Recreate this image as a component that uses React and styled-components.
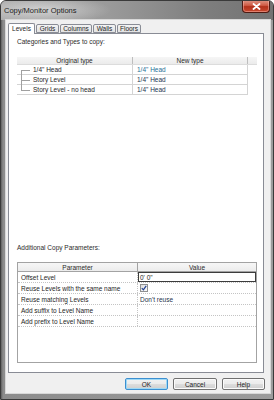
import React from "react";
import styled, { createGlobalStyle } from "styled-components";

const GlobalStyle = createGlobalStyle`
  html, body {
    margin: 0;
    padding: 0;
    background: #ffffff;
  }
  body {
    font-family: "Liberation Sans", Arial, sans-serif;
  }
`;

const Window = styled.div`
  width: 274px;
  height: 400px;
  box-sizing: border-box;
  display: flex;
  flex-direction: column;
  border: 1px solid #3a3a3a;
  border-radius: 6px 6px 0 0;
  background: linear-gradient(to bottom, #8c8c8c, #7e7e7e);
  overflow: hidden;
`;

const TitleBar = styled.div`
  height: 19px;
  flex: none;
  display: flex;
  justify-content: space-between;
  align-items: flex-start;
  padding: 0 3px 0 3px;
  background:
    radial-gradient(ellipse 70px 14px at 40px 9px, rgba(225, 225, 225, 0.75), rgba(225, 225, 225, 0) 100%),
    linear-gradient(to right, #a9a9a9 0%, #9a9a9a 40%, #7e7e7e 75%, #727272 100%);
`;

const Title = styled.span`
  margin-top: 5px;
  font-size: 7.5px;
  line-height: 9px;
  color: #1c1c1c;
`;

const CloseButton = styled.div`
  width: 28px;
  height: 13px;
  margin-top: -1px;
  box-sizing: border-box;
  display: flex;
  align-items: center;
  justify-content: center;
  border: 1px solid #4e1a12;
  border-top: none;
  border-radius: 0 0 4px 4px;
  background: linear-gradient(to bottom, #e09a8a 0%, #cf5b45 45%, #b2321c 55%, #c9482f 100%);
  box-shadow: inset 0 0 0 1px rgba(255, 200, 190, 0.45);
`;

const Frame = styled.div`
  flex: 1;
  display: flex;
  padding: 0 3px 6px 5px;
  background: linear-gradient(to right, #5f5f5f 0, #8c8c8c 2px, #9c9c9c 100%);
`;

const Client = styled.div`
  flex: 1;
  display: flex;
  flex-direction: column;
  padding: 3px 5px 3px 2px;
  background: #f0f0f0;
  box-shadow: 0 0 0 1px #d8d8d8;
`;

const TabStrip = styled.div`
  display: flex;
  align-items: flex-end;
  gap: 1px;
  height: 10px;
  position: relative;
  z-index: 1;
`;

const Tab = styled.div`
  box-sizing: border-box;
  width: ${(p) => p.$w}px;
  height: ${(p) => (p.$active ? 11 : 9)}px;
  margin-bottom: ${(p) => (p.$active ? -1 : 0)}px;
  display: flex;
  align-items: center;
  justify-content: center;
  border: 1px solid #898c95;
  border-bottom: ${(p) => (p.$active ? "none" : "1px solid #898c95")};
  border-radius: 2px 2px 0 0;
  background: ${(p) =>
    p.$active ? "#ffffff" : "linear-gradient(to bottom, #f3f3f3, #e3e3e3)"};
  font-size: 6.5px;
  color: #1e1e1e;
  padding-bottom: ${(p) => (p.$active ? 1 : 0)}px;
`;

const TabPanel = styled.div`
  flex: 1;
  display: flex;
  flex-direction: column;
  margin-right: 1px;
  padding: 3px 6px 9px 8px;
  background: #ffffff;
  border: 1px solid #898c95;
`;

const SectionLabel = styled.div`
  font-size: 6.5px;
  line-height: 10px;
  color: #2b2b2b;
  margin-bottom: ${(p) => p.$gap}px;
`;

const TypeGrid = styled.div`
  width: 240px;
  font-size: 6.5px;
  color: #1e1e1e;
`;

const TypeHeader = styled.div`
  display: flex;
  height: 8px;
  background: linear-gradient(to bottom, #f6f6f6, #ebebeb);
  border-bottom: 1px solid #dcdcdc;
  box-sizing: border-box;
`;

const TypeHeaderCell = styled.div`
  width: ${(p) => p.$w}px;
  box-sizing: border-box;
  border-right: 1px solid #bdbdbd;
  display: flex;
  align-items: center;
  justify-content: center;
  line-height: 8px;
  color: #2a2a2a;
`;

const TypeRow = styled.div`
  display: flex;
  width: 231px;
  height: 10px;
  box-sizing: border-box;
  border-bottom: 1px solid #d4d4d4;
  border-right: 1px solid #d4d4d4;
`;

const TypeCell = styled.div`
  width: ${(p) => p.$w}px;
  box-sizing: border-box;
  display: flex;
  align-items: center;
  padding-left: ${(p) => p.$pad}px;
  border-right: ${(p) => (p.$divider ? "1px solid #d4d4d4" : "none")};
  color: ${(p) => p.$color || "#1e1e1e"};
  white-space: nowrap;
`;

const ParamGrid = styled.div`
  width: 240px;
  height: 101px;
  box-sizing: border-box;
  border: 1px solid #a3a3a3;
  font-size: 6.5px;
  color: #1e1e1e;
`;

const ParamHeader = styled.div`
  display: flex;
  height: 9px;
  box-sizing: border-box;
  border-bottom: 1px solid #a3a3a3;
  background: linear-gradient(to bottom, #f7f7f7, #ececec);
`;

const ParamHeaderCell = styled.div`
  width: ${(p) => (p.$w ? `${p.$w}px` : "auto")};
  flex: ${(p) => (p.$w ? "none" : 1)};
  box-sizing: border-box;
  border-right: ${(p) => (p.$w ? "1px solid #a3a3a3" : "none")};
  display: flex;
  align-items: center;
  justify-content: center;
  color: #2a2a2a;
`;

const ParamRow = styled.div`
  display: flex;
  height: 11px;
  box-sizing: border-box;
  border-bottom: 1px dotted #c4c4c4;
`;

const ParamCell = styled.div`
  width: ${(p) => (p.$w ? `${p.$w}px` : "auto")};
  flex: ${(p) => (p.$w ? "none" : 1)};
  box-sizing: border-box;
  display: flex;
  align-items: center;
  padding-left: ${(p) => (p.$w ? 3 : 2)}px;
  border-right: ${(p) => (p.$w ? "1px dotted #c4c4c4" : "none")};
  outline: ${(p) => (p.$edit ? "1px solid #3c3c3c" : "none")};
  outline-offset: -1px;
  color: ${(p) => p.$color || "#1e1e1e"};
  white-space: nowrap;
`;

const CheckBox = styled.div`
  width: 8px;
  height: 8px;
  box-sizing: border-box;
  border: 1px solid #8e8f8f;
  background: linear-gradient(135deg, #dcdcdc, #fbfbfb);
  display: flex;
  align-items: center;
  justify-content: center;
`;

const Spacer = styled.div`
  flex: 1;
`;

const ButtonBar = styled.div`
  display: flex;
  justify-content: flex-end;
  gap: 5px;
  margin-top: 5px;
`;

const DialogButton = styled.div`
  width: ${(p) => p.$w}px;
  height: 12px;
  box-sizing: border-box;
  display: flex;
  align-items: center;
  justify-content: center;
  border: 1px solid ${(p) => (p.$default ? "#3c8fd0" : "#707070")};
  border-radius: 2px;
  background: linear-gradient(to bottom, #f2f2f2 0%, #ebebeb 50%, #dddddd 51%, #cfcfcf 100%);
  box-shadow: ${(p) =>
    p.$default ? "inset 0 0 0 1px #9fd9f6" : "inset 0 0 0 1px #fbfbfb"};
  font-size: 6.5px;
  color: #1e1e1e;
`;

const TreeLine = ({ first, last }) => (
  <svg width="14" height="10" viewBox="0 0 14 10" style={{ flex: "none" }}>
    <line
      x1="4.5"
      y1={first ? 5 : 0}
      x2="4.5"
      y2={last ? 5.5 : 10}
      stroke="#a0a0a0"
      strokeWidth="1"
    />
    <line x1="4" y1="5.5" x2="13" y2="5.5" stroke="#a0a0a0" strokeWidth="1" />
  </svg>
);

const CloseGlyph = () => (
  <svg width="9" height="7" viewBox="0 0 9 7">
    <path d="M1.5 1 L7.5 6 M7.5 1 L1.5 6" stroke="#ffffff" strokeWidth="1.8" strokeLinecap="round" />
  </svg>
);

const CheckGlyph = () => (
  <svg width="6" height="6" viewBox="0 0 6 6">
    <path d="M0.8 3.2 L2.4 4.8 L5.2 0.9" stroke="#1c3d8f" strokeWidth="1.2" fill="none" />
  </svg>
);

const tabs = [
  { name: "Levels", w: 27 },
  { name: "Grids", w: 23 },
  { name: "Columns", w: 32 },
  { name: "Walls", w: 23 },
  { name: "Floors", w: 24 },
];

const typeRows = [
  { from: "1/4\" Head", to: "1/4\" Head", color: "#1f6f95" },
  { from: "Story Level", to: "1/4\" Head", color: "#24364f" },
  { from: "Story Level - no head", to: "1/4\" Head", color: "#24364f" },
];

const params = [
  { name: "Offset Level", value: "0'  0\"", edit: true },
  { name: "Reuse Levels with the same name", check: true },
  { name: "Reuse matching Levels", value: "Don't reuse", color: "#26324a" },
  { name: "Add suffix to Level Name", value: "" },
  { name: "Add prefix to Level Name", value: "" },
];

export default function App() {
  return (
    <>
      <GlobalStyle />
      <Window>
        <TitleBar>
          <Title>Copy/Monitor Options</Title>
          <CloseButton>
            <CloseGlyph />
          </CloseButton>
        </TitleBar>
        <Frame>
          <Client>
            <TabStrip>
              {tabs.map((t, i) => (
                <Tab key={t.name} $w={t.w} $active={i === 0}>
                  {t.name}
                </Tab>
              ))}
            </TabStrip>
            <TabPanel>
              <SectionLabel $gap={10}>Categories and Types to copy:</SectionLabel>
              <TypeGrid>
                <TypeHeader>
                  <TypeHeaderCell $w={116}>Original type</TypeHeaderCell>
                  <TypeHeaderCell $w={115}>New type</TypeHeaderCell>
                </TypeHeader>
                {typeRows.map((r, i) => (
                  <TypeRow key={r.from}>
                    <TypeCell $w={116} $pad={0} $divider>
                      <TreeLine first={i === 0} last={i === typeRows.length - 1} />
                      <span style={{ marginLeft: 2 }}>{r.from}</span>
                    </TypeCell>
                    <TypeCell $w={114} $pad={4} $color={r.color}>
                      {r.to}
                    </TypeCell>
                  </TypeRow>
                ))}
              </TypeGrid>
              <Spacer />
              <SectionLabel $gap={9}>Additional Copy Parameters:</SectionLabel>
              <ParamGrid>
                <ParamHeader>
                  <ParamHeaderCell $w={120}>Parameter</ParamHeaderCell>
                  <ParamHeaderCell>Value</ParamHeaderCell>
                </ParamHeader>
                {params.map((p) => (
                  <ParamRow key={p.name}>
                    <ParamCell $w={120}>{p.name}</ParamCell>
                    <ParamCell $edit={p.edit} $color={p.color}>
                      {p.check ? (
                        <CheckBox>
                          <CheckGlyph />
                        </CheckBox>
                      ) : (
                        p.value
                      )}
                    </ParamCell>
                  </ParamRow>
                ))}
              </ParamGrid>
            </TabPanel>
            <ButtonBar>
              <DialogButton $w={43} $default>
                OK
              </DialogButton>
              <DialogButton $w={44}>Cancel</DialogButton>
              <DialogButton $w={43}>Help</DialogButton>
            </ButtonBar>
          </Client>
        </Frame>
      </Window>
    </>
  );
}
